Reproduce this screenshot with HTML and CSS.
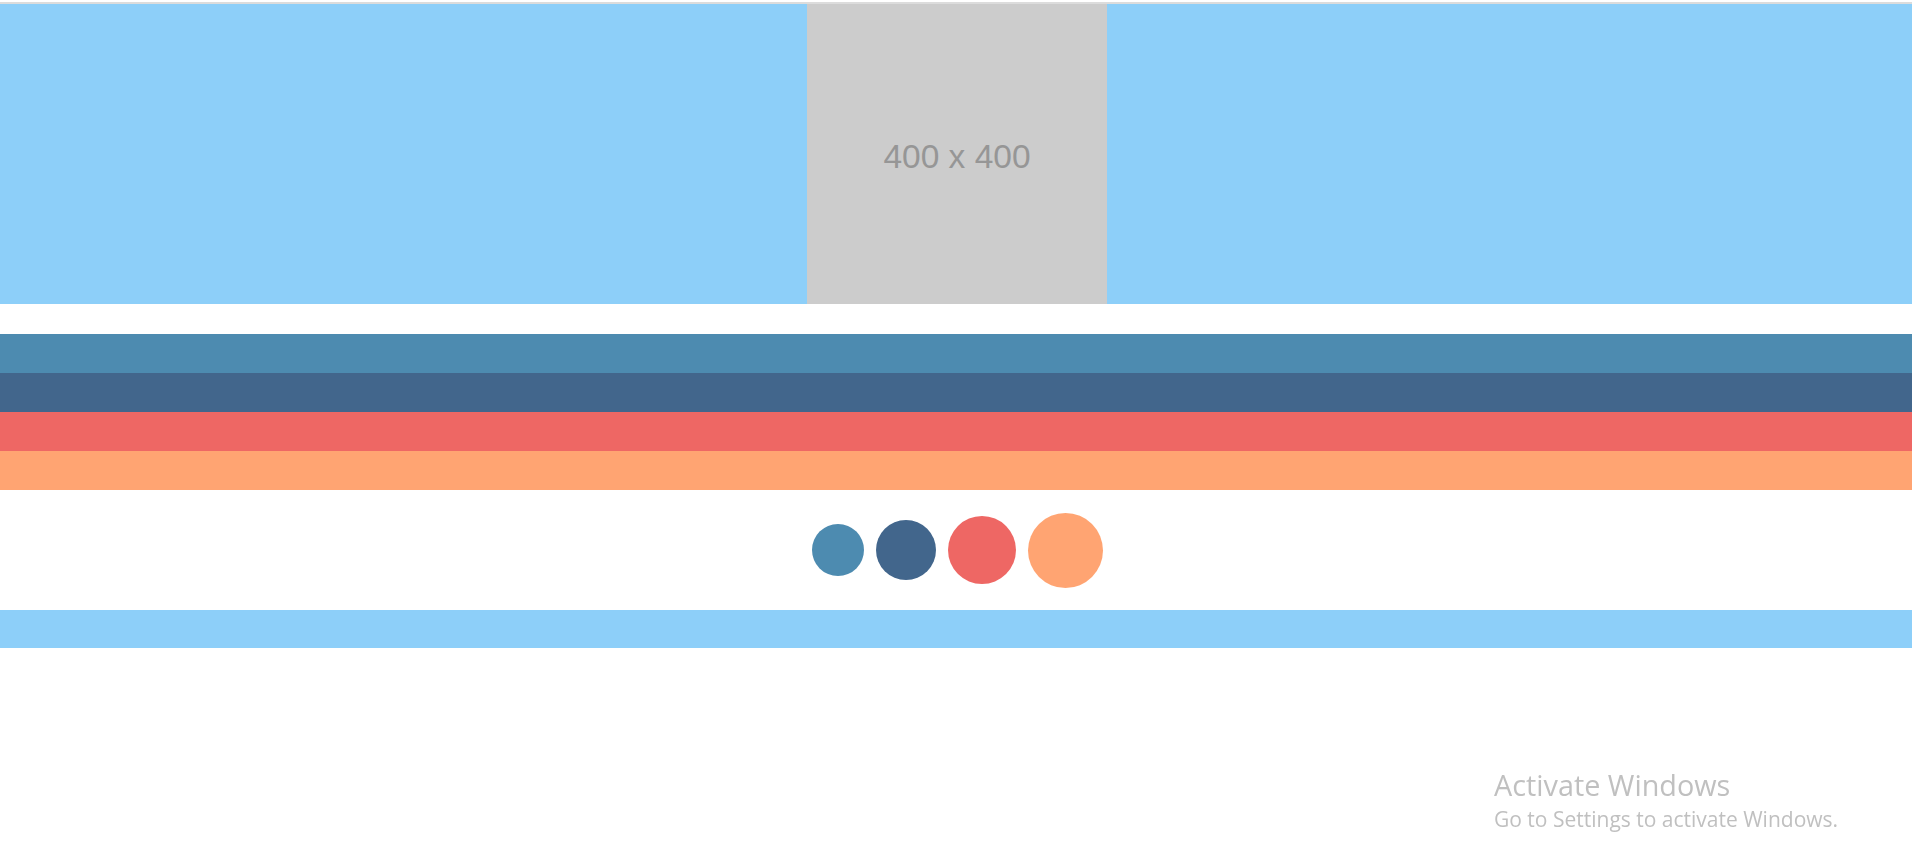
FILE: index.html
```html
<!DOCTYPE html>
<html>
<head>
<meta charset="utf-8">
<link rel="stylesheet" href="styles.css">
</head>
<body>
<div class="rule"></div>
<div class="hero">
  <div class="placeholder">400 x 400</div>
</div>
<div class="stripes">
  <div class="stripe s1"></div>
  <div class="stripe s2"></div>
  <div class="stripe s3"></div>
  <div class="stripe s4"></div>
</div>
<div class="dots">
  <div class="dot d1"></div>
  <div class="dot d2"></div>
  <div class="dot d3"></div>
  <div class="dot d4"></div>
</div>
<div class="bar"></div>
<div class="watermark">
  <div class="wm-title">Activate Windows</div>
  <div class="wm-sub">Go to Settings to activate Windows.</div>
</div>
</body>
</html>
```
FILE: styles.css
```css
html, body { margin: 0; padding: 0; background: #fff; }
body { font-family: "Liberation Sans", Arial, sans-serif; }
.rule { height: 2px; margin-top: 2px; background: #dcdcdc; }
.hero { height: 300px; background: #8dcff9; display: flex; justify-content: center; }
.placeholder {
  width: 300px; height: 300px; margin-left: 2px; background: #cccccc;
  color: #969696; font-size: 33.5px; display: flex; align-items: center; justify-content: center;
  padding-top: 6px; box-sizing: border-box;
}
.stripes { margin-top: 30px; display: flex; flex-direction: column; }
.stripe { height: 39px; }
.s1, .d1 { background: #4d8bb0; }
.s2, .d2 { background: #42668c; }
.s3, .d3 { background: #ee6764; }
.s4, .d4 { background: #ffa472; }
.dots { height: 120px; display: flex; justify-content: center; align-items: center; gap: 12px; padding-left: 3px; }
.dot { border-radius: 50%; }
.d1 { width: 52px; height: 52px; }
.d2 { width: 60px; height: 60px; }
.d3 { width: 68px; height: 68px; }
.d4 { width: 75px; height: 75px; }
.bar { height: 38px; background: #8dcff9; }
.watermark { position: fixed; left: 1494px; top: 767px; color: #c0c0c0; font-family: "Open Sans", sans-serif; white-space: nowrap; }
.wm-title { font-size: 28.8px; line-height: 36px; }
.wm-sub { font-size: 21px; line-height: 28px; margin-top: 2px; }
```
